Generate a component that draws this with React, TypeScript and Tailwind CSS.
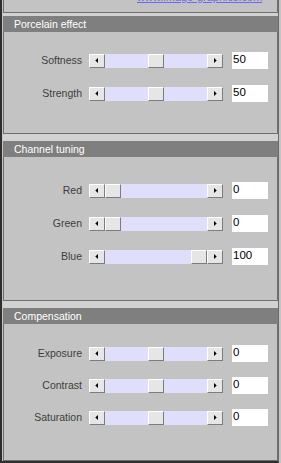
const FONT = { fontFamily: '"Liberation Sans", Arial, sans-serif' }

interface Row {
  label: string
  value: number
  min: number
  max: number
}

interface Section {
  title: string
  height: string
  bodyPad: string
  gap: string
  rows: Row[]
}

const sections: Section[] = [
  {
    title: 'Porcelain effect',
    height: 'h-[118px]',
    bodyPad: 'pt-[20px]',
    gap: 'gap-[16px]',
    rows: [
      { label: 'Softness', value: 50, min: 0, max: 100 },
      { label: 'Strength', value: 50, min: 0, max: 100 },
    ],
  },
  {
    title: 'Channel tuning',
    height: 'h-[160px]',
    bodyPad: 'pt-[25px]',
    gap: 'gap-[16px]',
    rows: [
      { label: 'Red', value: 0, min: 0, max: 100 },
      { label: 'Green', value: 0, min: 0, max: 100 },
      { label: 'Blue', value: 100, min: 0, max: 100 },
    ],
  },
  {
    title: 'Compensation',
    height: 'h-[153px]',
    bodyPad: 'pt-[21px]',
    gap: 'gap-[15px]',
    rows: [
      { label: 'Exposure', value: 0, min: -100, max: 100 },
      { label: 'Contrast', value: 0, min: -100, max: 100 },
      { label: 'Saturation', value: 0, min: -100, max: 100 },
    ],
  },
]

function Arrow({ dir }: { dir: 'left' | 'right' }) {
  return (
    <svg width="3" height="5" viewBox="0 0 3 5" className="block">
      {dir === 'left' ? <polygon points="3,0 3,5 0.3,2.5" fill="#000" /> : <polygon points="0,0 0,5 2.7,2.5" fill="#000" />}
    </svg>
  )
}

function Slider({ value, min, max }: { value: number; min: number; max: number }) {
  // track is 102px, thumb 16px
  const left = Math.round(((value - min) / (max - min)) * 86)
  return (
    <div className="flex h-[14px] w-[134px]">
      <div className="flex h-full w-[16px] items-center justify-center border-t border-l border-t-white border-l-white border-b border-r border-b-[#7c7c7c] border-r-[#7c7c7c] bg-[#e6e6e6] pr-[2px]">
        <Arrow dir="left" />
      </div>
      <div className="relative h-full w-[102px] bg-[#dfdffc]">
        <div
          className="absolute top-0 h-full w-[16px] border-t border-l border-t-white border-l-white border-b border-r border-b-[#7c7c7c] border-r-[#7c7c7c] bg-[#e6e6e6]"
          style={{ left }}
        />
      </div>
      <div className="flex h-full w-[16px] items-center justify-center border-t border-l border-t-white border-l-white border-b border-r border-b-[#7c7c7c] border-r-[#7c7c7c] bg-[#e6e6e6] pl-[1px]">
        <Arrow dir="right" />
      </div>
    </div>
  )
}

function SliderRow({ row }: { row: Row }) {
  return (
    <div className="flex h-[17px] items-center">
      <div className="w-[78px] text-right text-[10.5px] leading-none text-[#3e3e3e]">{row.label}</div>
      <div className="ml-[7px]">
        <Slider value={row.value} min={row.min} max={row.max} />
      </div>
      <div className="ml-[9px] flex h-[17px] w-[36px] items-start bg-white pl-[1px] pt-[2px] text-[11.5px] leading-none text-black">
        {row.value}
      </div>
    </div>
  )
}

function Panel({ section }: { section: Section }) {
  return (
    <div className={`flex w-[275px] flex-col ${section.height}`}>
      <div className="flex h-[16px] items-center bg-[#7f7f7f] pl-[11px] text-[10.5px] leading-none text-white">
        {section.title}
      </div>
      <div
        className={`flex flex-1 flex-col ${section.gap} ${section.bodyPad} border-l border-r border-b border-[#6f6f6f] bg-[#c3c3c3]`}
      >
        {section.rows.map(r => (
          <SliderRow key={r.label} row={r} />
        ))}
      </div>
    </div>
  )
}

export default function App() {
  return (
    <div className="h-[463px] w-[281px] overflow-hidden bg-[#c4c4c4]" style={FONT}>
      <div className="flex h-[463px] w-[279px] flex-col border-l-2 border-b-2 border-r border-l-[#2e2e2e] border-b-[#2e2e2e] border-r-[#6a6a6a] pl-[1px]">
        {/* tail of the panel above */}
        <div className="h-[13px] w-[275px] overflow-hidden border-l border-r border-b border-[#6f6f6f] bg-[#c3c3c3]">
          <div className="-mt-[9px] pl-[133px] text-[11px] leading-[13px] text-[#6a6af0] underline">
            www.image-graphics.com
          </div>
        </div>
        <div className="h-[3px] bg-[#d2d2d2]" />
        <Panel section={sections[0]} />
        <div className="h-[7px] bg-[#d2d2d2]" />
        <Panel section={sections[1]} />
        <div className="h-[7px] bg-[#d2d2d2]" />
        <Panel section={sections[2]} />
      </div>
    </div>
  )
}
